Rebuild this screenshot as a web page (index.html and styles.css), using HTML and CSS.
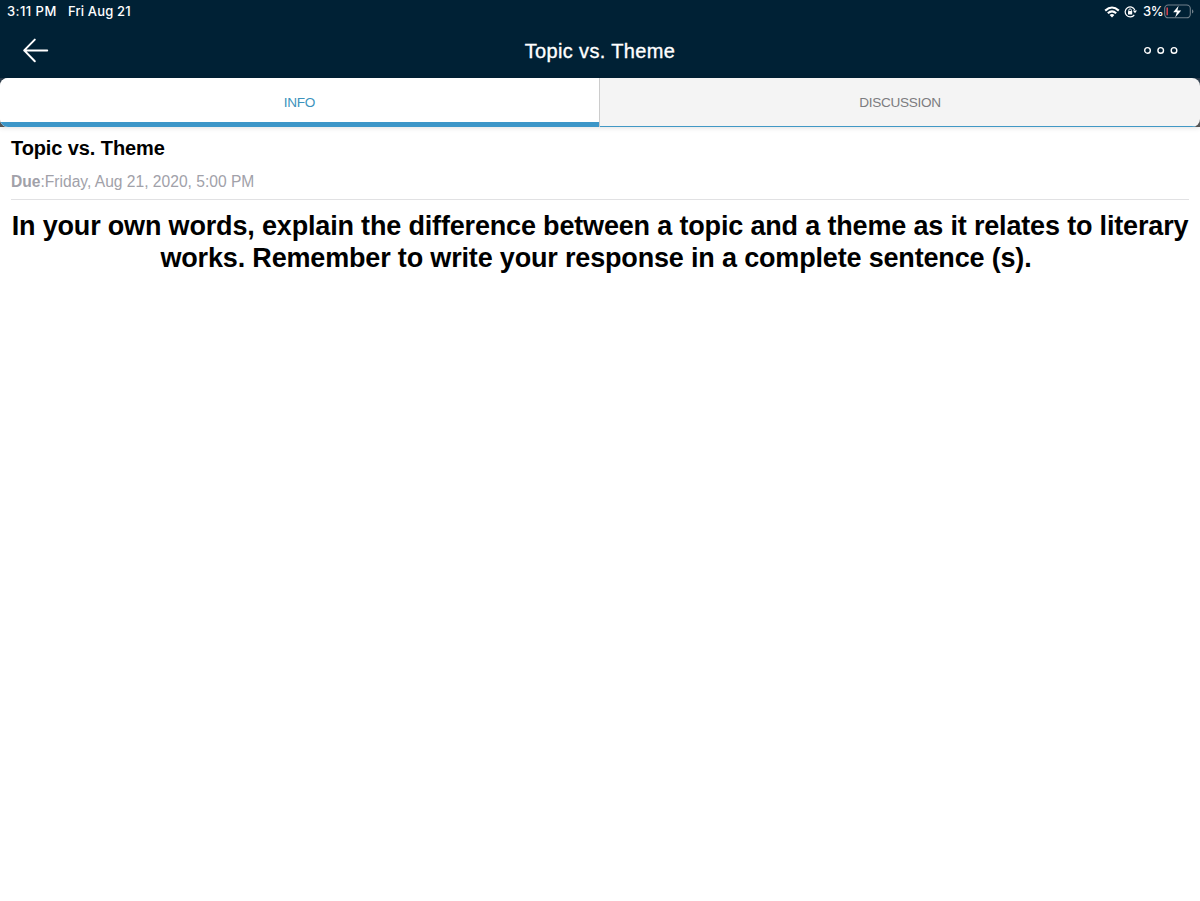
FILE: index.html
```html
<!DOCTYPE html>
<html lang="en">
<head>
<meta charset="utf-8">
<title>Topic vs. Theme</title>
<link rel="stylesheet" href="styles.css">
</head>
<body>
<header class="header">
  <div class="status">
    <div class="status-left"><span class="time">3:11 PM</span><span class="date">Fri Aug 21</span></div>
    <div class="status-right">
      <svg class="wifi" width="16" height="12" viewBox="0 0 16 12" fill="none" stroke="#fff" stroke-width="2.1">
        <path d="M1.2 4.6Q8-1.6 14.8 4.6M3.8 7.3Q8 3.5 12.2 7.3"/>
        <path d="M8 11.4 5.6 9Q8 7 10.4 9Z" fill="#fff" stroke="none"/>
      </svg>
      <svg class="lock" width="14" height="12" viewBox="0 0 14 12" fill="none" stroke="#fff" stroke-width="1.2">
        <path d="M10.8 4A5 5 0 1 0 10.3 8.8"/>
        <path d="M8.8 4.5h4.2L11 7.2Z" fill="#fff" stroke="none"/>
        <path d="M4.8 5V4.2a1.3 1.3 0 0 1 2.6 0V5" stroke-width=".9"/>
        <rect x="4" y="4.9" width="4.2" height="3.5" rx=".5" fill="#fff" stroke="none"/>
      </svg>
      <span class="percent">3%</span>
      <svg class="battery" width="30" height="15" viewBox="0 0 30 15">
        <rect x=".7" y="1" width="25.6" height="12.8" rx="3.6" fill="none" stroke="#71808b" stroke-width="1.1"/>
        <path d="M3.2 3.5v7.8" stroke="#df4750" stroke-width="1.5"/>
        <path d="M28 5.2v4.4q1.4-.7 1.4-2.2T28 5.2Z" fill="#71808b"/>
        <path d="M14.6 1.8 9.2 8.2h3.6l-1.6 5.2 6-6.8h-3.8Z" fill="#fff"/>
      </svg>
    </div>
  </div>
  <nav class="navbar">
    <svg class="back" width="28" height="26" viewBox="0 0 28 26" fill="none" stroke="#fff" stroke-width="2" stroke-linecap="round" stroke-linejoin="round">
      <path d="M25.2 13.4H2.2M12.8 2.6 2.2 13.4 12.8 24.2"/>
    </svg>
    <h1 class="title">Topic vs. Theme</h1>
    <svg class="more" width="36" height="10" viewBox="0 0 36 10" fill="none" stroke="#fff" stroke-width="1.4">
      <circle cx="4.5" cy="5.4" r="2.8"/><circle cx="17.7" cy="5.4" r="2.8"/><circle cx="31" cy="5.4" r="2.8"/>
    </svg>
  </nav>
</header>
<div class="tab-frame">
  <div class="tabs">
    <div class="tab tab-active">INFO</div>
    <div class="tab">DISCUSSION</div>
  </div>
</div>
<main class="content">
  <h2 class="heading">Topic vs. Theme</h2>
  <p class="due"><b>Due</b>:Friday, Aug 21, 2020, 5:00 PM</p>
  <div class="prompt">
    <div class="line-one">In your own words, explain the difference between a topic and a theme as it relates to literary</div>
    <div class="line-two">works. Remember to write your response in a complete sentence (s).</div>
  </div>
</main>
</body>
</html>
```
FILE: styles.css
```css
* { box-sizing: border-box; }
body { margin: 0; min-height: 901px; background: #fff; font-family: "Liberation Sans", Arial, sans-serif; color: #000; }
h1, h2, p { margin: 0; }
svg { display: block; flex: none; }
.header { height: 78px; background: #002135; color: #fff; }
.status { height: 23px; display: flex; justify-content: space-between; padding: 0 6px 0 7px; font-family: Inter, sans-serif; font-size: 13px; font-weight: 500; line-height: 23px; white-space: nowrap; }
.status-left { display: flex; gap: 12px; }
.time { width: 49px; letter-spacing: .45px; }
.date { letter-spacing: .15px; }
.status-right { display: flex; align-items: center; }
.wifi { margin-right: -1px; }
.lock { margin-left: 5px; }
.percent { margin-left: 5px; width: 21px; letter-spacing: -.5px; }
.navbar { height: 53px; display: grid; grid-template-columns: 60px 1fr 60px; align-items: center; }
.back { margin-left: 22px; }
.title { text-align: center; font-size: 20px; font-weight: 400; line-height: 24px; letter-spacing: .35px; -webkit-text-stroke: .35px #fff; padding-top: 2px; }
.more { margin-left: 3px; }
.tab-frame { height: 49px; background: linear-gradient(#24384a, #555 25%); box-shadow: 0 1px 5px rgba(0, 0, 0, .12); }
.tabs { height: 49px; display: grid; grid-template: 49px / 600px 1fr; border-radius: 8px; overflow: hidden; background: #f4f4f4; }
.tab { text-align: center; font-size: 13.6px; line-height: 49px; letter-spacing: -.3px; color: #7c7c80; border-bottom: 1px solid #4198c5; }
.tab-active { background: linear-gradient(#3c96c8, #3c96c8) 0 100% / 599px 5px no-repeat #fff; color: #3c93bd; border-right: 1px solid #ccc; border-bottom: 0; }
.content { padding: 9px 11px 0; }
.heading { font-size: 20px; line-height: 24px; letter-spacing: -.1px; }
.due { height: 40px; padding-top: 13px; border-bottom: 1px solid #e1e1e3; color: #a1a1a9; font-size: 15.6px; line-height: 18px; white-space: nowrap; }
.prompt { padding-top: 10px; font-size: 27px; font-weight: 700; line-height: 32px; letter-spacing: -.17px; white-space: nowrap; text-align: center; }
.line-two { margin-left: -8px; }
```
